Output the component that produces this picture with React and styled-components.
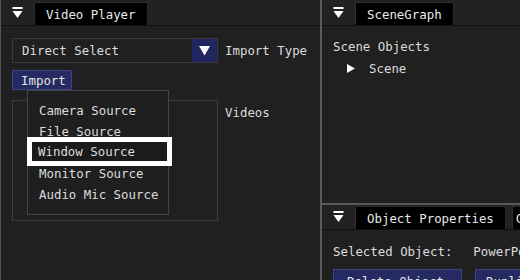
import React from 'react';
import styled, { createGlobalStyle } from 'styled-components';

const Global = createGlobalStyle`
  html, body { margin: 0; padding: 0; background: #202020; }
  body {
    font-family: "DejaVu Sans Mono", "Liberation Mono", monospace;
    font-size: 12.4px;
    color: #dcdcdc;
  }
`;

const Screen = styled.div`
  width: 520px;
  height: 280px;
  display: flex;
  overflow: hidden;
  background: #202020;
`;

const Panel = styled.div`
  position: relative;
  display: flex;
  flex-direction: column;
  width: ${p => p.width || 'auto'};
  flex: ${p => (p.grow ? 1 : 'none')};
  height: ${p => p.height || 'auto'};
  min-width: 0;
  overflow: hidden;
  border-left: ${p => (p.edge ? '1px solid #555' : 'none')};
  background: #202020;
`;

const Column = styled.div`
  flex: 1;
  display: flex;
  flex-direction: column;
  min-width: 0;
`;

const VSplit = styled.div`
  width: 2px;
  flex: none;
  background: #5a5a5a;
`;

const HSplit = styled.div`
  height: 2px;
  flex: none;
  background: #5a5a5a;
`;

const TabBar = styled.div`
  height: ${p => p.h}px;
  flex: none;
  display: flex;
  align-items: flex-end;
  background: #222;
  border-bottom: 1px solid #0e0e0e;
  white-space: nowrap;
`;

const MenuIcon = styled.div`
  width: ${p => p.w}px;
  height: 100%;
  flex: none;
  display: flex;
  align-items: center;
  justify-content: center;
`;

const Tab = styled.div`
  height: ${p => p.h}px;
  padding: 0 ${p => p.pad ?? 11}px;
  margin-right: 6px;
  display: flex;
  align-items: center;
  background: #000;
  border: 1px solid #2c2c2c;
  border-bottom: none;
  color: #e8e8e8;
  flex: none;
`;

const Body = styled.div`
  position: relative;
  flex: 1;
  padding: ${p => p.pad};
  display: flex;
  flex-direction: column;
`;

const Row = styled.div`
  display: flex;
  align-items: ${p => p.align || 'center'};
  gap: ${p => p.gap || 7}px;
  margin-top: ${p => p.mt || 0}px;
`;

const Combo = styled.div`
  width: 206px;
  height: 25px;
  box-sizing: border-box;
  border: 1px solid #3a3a3a;
  display: flex;
  align-items: center;
  justify-content: space-between;
`;

const ComboText = styled.span`
  padding-left: 9px;
`;

const ArrowBox = styled.div`
  width: 25px;
  height: 100%;
  background: #1f2660;
  display: flex;
  align-items: center;
  justify-content: center;
`;

const Label = styled.span`
  padding-top: ${p => p.pt || 0}px;
`;

const Button = styled.div`
  box-sizing: border-box;
  width: ${p => p.w}px;
  height: ${p => p.h}px;
  padding-left: ${p => p.pl || 9}px;
  display: flex;
  align-items: center;
  background: #252a62;
  border: 1px solid #3c4284;
  color: #e4e4e4;
  flex: none;
`;

const ListBox = styled.div`
  width: 206px;
  height: 121px;
  box-sizing: border-box;
  border: 1px solid #3e3e3e;
`;

const Popup = styled.div`
  position: absolute;
  left: 26px;
  top: 64px;
  width: 142px;
  box-sizing: border-box;
  padding: 9px 0 9px 11px;
  background: #1f1f1f;
  border: 1px solid #444;
  display: flex;
  flex-direction: column;
`;

const MenuItem = styled.div`
  height: 21px;
  line-height: 21px;
  white-space: nowrap;
  ${p =>
    p.selected &&
    `
    box-sizing: border-box;
    height: 29px;
    line-height: 19px;
    width: 145px;
    margin: -5px 0 -3px -12px;
    padding-left: 6px;
    border: 5px solid #fff;
    background: #1b1b1b;
  `}
`;

const TreeRow = styled.div`
  display: flex;
  align-items: center;
  gap: 14px;
  padding-left: 14px;
  margin-top: 7px;
`;

const ValueRow = styled.div`
  display: flex;
  gap: 21px;
  white-space: nowrap;
`;

const DockIcon = () => (
  <svg width="11" height="12" viewBox="0 0 11 12">
    <rect x="0.5" y="0" width="10" height="2" fill="#fff" />
    <polygon points="0.5,4 10.5,4 5.5,11" fill="#fff" />
  </svg>
);

const DownArrow = () => (
  <svg width="11" height="11" viewBox="0 0 11 11">
    <polygon points="0,1 11,1 5.5,10.5" fill="#fff" />
  </svg>
);

const RightArrow = () => (
  <svg width="8" height="9" viewBox="0 0 8 9">
    <polygon points="0,0 8,4.5 0,9" fill="#fff" />
  </svg>
);

const sources = ['Camera Source', 'File Source', 'Window Source', 'Monitor Source', 'Audio Mic Source'];

export default function App() {
  return (
    <Screen>
      <Global />
      <Panel width="319px" edge>
        <TabBar h={25}>
          <MenuIcon w={33}><DockIcon /></MenuIcon>
          <Tab h={22}>Video Player</Tab>
        </TabBar>
        <Body pad="12px 0 0 11px">
          <Row>
            <Combo>
              <ComboText>Direct Select</ComboText>
              <ArrowBox><DownArrow /></ArrowBox>
            </Combo>
            <Label>Import Type</Label>
          </Row>
          <Row mt={7}>
            <Button w={60} h={20} pl={8}>Import</Button>
          </Row>
          <Row mt={10} align="flex-start">
            <ListBox />
            <Label pt={5}>Videos</Label>
          </Row>
          <Popup>
            {sources.map(s => (
              <MenuItem key={s} selected={s === 'Window Source'}>{s}</MenuItem>
            ))}
          </Popup>
        </Body>
      </Panel>
      <VSplit />
      <Column>
        <Panel height="203px">
          <TabBar h={25}>
            <MenuIcon w={33}><DockIcon /></MenuIcon>
            <Tab h={22}>SceneGraph</Tab>
          </TabBar>
          <Body pad="13px 0 0 11px">
            <div>Scene Objects</div>
            <TreeRow><RightArrow /><span>Scene</span></TreeRow>
          </Body>
        </Panel>
        <HSplit />
        <Panel grow>
          <TabBar h={24}>
            <MenuIcon w={33}><DockIcon /></MenuIcon>
            <Tab h={22}>Object Properties</Tab>
            <Tab h={22} pad={3}>Camera</Tab>
          </TabBar>
          <Body pad="14px 0 0 11px">
            <ValueRow><span>Selected Object:</span><span>PowerPoint</span></ValueRow>
            <Row mt={10} gap={13}>
              <Button w={129} h={24} pl={13}>Delete Object</Button>
              <Button w={120} h={24} pl={10}>Duplicate</Button>
            </Row>
          </Body>
        </Panel>
      </Column>
    </Screen>
  );
}
